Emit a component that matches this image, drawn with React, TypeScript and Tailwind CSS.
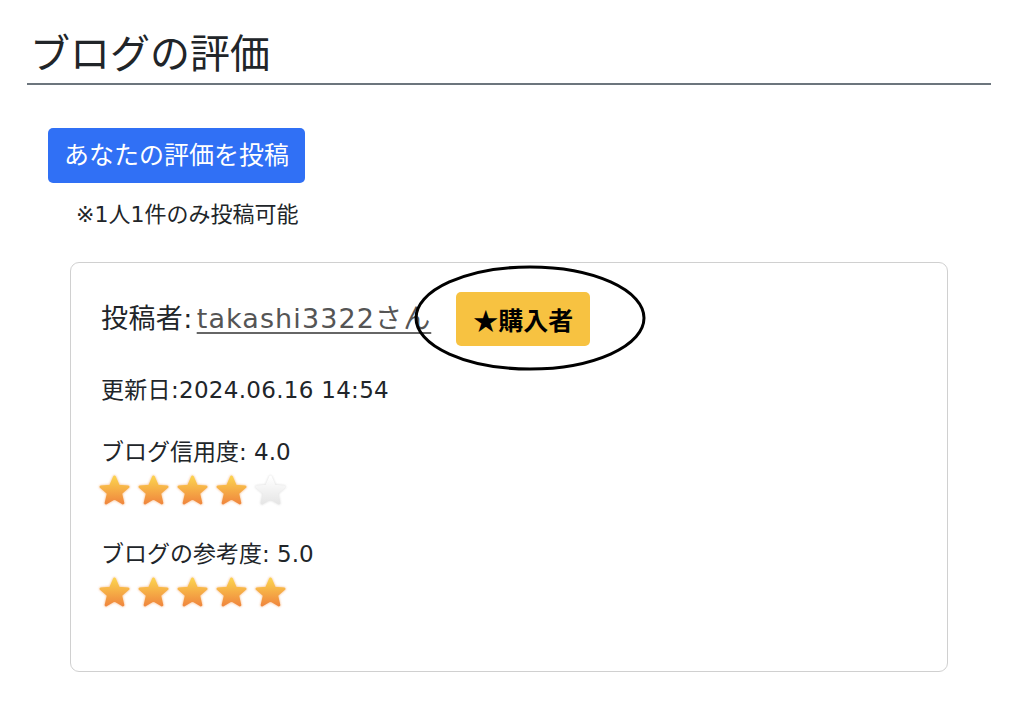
import React from "react";

const FONT = { fontFamily: '"DejaVu Sans", "Noto Sans CJK JP", sans-serif' };
const CJK = { fontFamily: '"Noto Sans CJK JP", "DejaVu Sans", sans-serif' };

function Star({ filled, id }: { filled: boolean; id: string }) {
  return (
    <svg width="39" height="38" viewBox="0 0 34 34" className="block">
      <defs>
        <linearGradient id={`g${id}`} x1="0" y1="0" x2="0" y2="1">
          {filled ? (
            <>
              <stop offset="0" stopColor="#fbd24e" />
              <stop offset="1" stopColor="#f0883e" />
            </>
          ) : (
            <>
              <stop offset="0" stopColor="#ffffff" />
              <stop offset="1" stopColor="#e6e6e6" />
            </>
          )}
        </linearGradient>
        <filter id={`f${id}`} x="-30%" y="-30%" width="160%" height="160%">
          <feGaussianBlur stdDeviation="0.9" />
        </filter>
      </defs>
      <path
        d="M17 3.5 L20.6 11.6 L29.2 12.4 L22.6 18.2 L24.6 26.9 L17 22.4 L9.4 26.9 L11.4 18.2 L4.8 12.4 L13.4 11.6 Z"
        fill={filled ? "#f6b27a" : "#d8d8d8"}
        stroke={filled ? "#f6b27a" : "#d8d8d8"}
        strokeWidth="3"
        strokeLinejoin="round"
        filter={`url(#f${id})`}
        opacity="0.8"
      />
      <path
        d="M17 3.5 L20.6 11.6 L29.2 12.4 L22.6 18.2 L24.6 26.9 L17 22.4 L9.4 26.9 L11.4 18.2 L4.8 12.4 L13.4 11.6 Z"
        fill={`url(#g${id})`}
        stroke={`url(#g${id})`}
        strokeWidth="2.4"
        strokeLinejoin="round"
      />
    </svg>
  );
}

function Stars({ n, prefix }: { n: number; prefix: string }) {
  return (
    <div className="flex gap-0 ml-[-6px] mt-[6px]">
      {[0, 1, 2, 3, 4].map((i) => (
        <Star key={i} filled={i < n} id={`${prefix}${i}`} />
      ))}
    </div>
  );
}

export default function App() {
  return (
    <div className="w-[1024px] h-[704px] bg-white text-[#212529] overflow-hidden" style={FONT}>
      <div className="pl-[27px] pr-[33px] pt-[30px]">
        <h1 className="text-[40px] leading-[48px] font-normal pl-[3px] pb-[5px] border-b-2 border-[#6c757d]">
          ブログの評価
        </h1>
        <div className="pl-[21px] mt-[43px]">
          <button className="h-[55px] px-[16px] rounded-[5px] bg-[#3070f5] text-white text-[25px] leading-[30px]">
            あなたの評価を投稿
          </button>
          <div className="text-[22px] leading-[28px] mt-[18px] pl-[28px]">※1人1件のみ投稿可能</div>
        </div>
        <div className="ml-[43px] mt-[33px] w-[878px] h-[410px] border-[1.5px] border-[#d0d0d0] rounded-[9px] pl-[30px] pt-[29px]">
          <div className="flex items-center h-[54px]">
            <span className="text-[27px] leading-[32px] tracking-[0.4px]">
              投稿者:
              <a className="ml-[4px] tracking-[1.1px] underline text-[#555] decoration-[#666] decoration-[1.5px] underline-offset-[4px]">
                takashi3322さん
              </a>
            </span>
            <div className="relative ml-[25px]">
              <div
                className="h-[54px] w-[134px] rounded-[5px] bg-[#f7c241] flex items-center justify-center text-black font-bold text-[25px] leading-[30px]"
                style={CJK}
              >
                ★購入者
              </div>
              <svg className="absolute left-[-43px] top-[-28px]" width="234" height="108" viewBox="0 0 234 108">
                <ellipse cx="117" cy="54" rx="114" ry="51" fill="none" stroke="#000" strokeWidth="3" />
              </svg>
            </div>
          </div>
          <div className="text-[23px] leading-[30px] tracking-[0.3px] mt-[29px]">更新日:2024.06.16 14:54</div>
          <div className="text-[23px] leading-[30px] mt-[32px]">ブログ信用度: 4.0</div>
          <Stars n={4} prefix="a" />
          <div className="text-[23px] leading-[30px] mt-[28px]">ブログの参考度: 5.0</div>
          <Stars n={5} prefix="b" />
        </div>
      </div>
    </div>
  );
}
